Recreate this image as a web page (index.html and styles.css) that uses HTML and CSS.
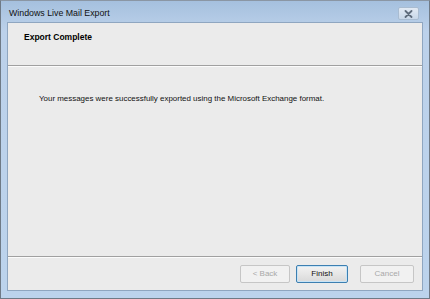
FILE: index.html
```html
<!doctype html>
<html>
  <head>
    <link rel="stylesheet" href="styles.css">
  </head>
  <body>
    <div class="window">
      <div class="titlebar">
        <span class="title">Windows Live Mail Export</span>
        <span class="close">
          <svg width="9" height="8" viewBox="0 0 9 8">
            <path d="M1.5 1 L7.5 7 M7.5 1 L1.5 7" stroke="#5f6c7c" stroke-width="1.8" stroke-linecap="round"/>
          </svg>
        </span>
      </div>
      <div class="client">
        <div class="header">
          <h1>Export Complete</h1>
        </div>
        <div class="body">
          <p>Your messages were successfully exported using the Microsoft Exchange format.</p>
        </div>
        <div class="footer">
          <button class="btn" disabled>&lt; Back</button>
          <button class="btn default">Finish</button>
          <button class="btn" disabled>Cancel</button>
        </div>
      </div>
    </div>
  </body>
</html>
```

FILE: styles.css
```css
html, body {
  margin: 0;
  padding: 0;
}

body {
  width: 430px;
  height: 299px;
  background: #fff;
  font-family: "Liberation Sans", sans-serif;
}

.window {
  width: 430px;
  height: 299px;
  box-sizing: border-box;
  border: 1px solid #6f7a86;
  border-top-color: #8a96a4;
  background: linear-gradient(to bottom, #a5c0de, #bcd1ea 30px, #bcd3ec);
  display: flex;
  flex-direction: column;
  padding: 0 6px 7px 6px;
}

.titlebar {
  height: 21px;
  display: flex;
  align-items: center;
  justify-content: space-between;
}

.title {
  font-size: 8.8px;
  color: #111;
  padding-left: 2px;
  margin-top: 3px;
}

.close {
  width: 19px;
  height: 11px;
  margin-right: 4px;
  margin-top: 4px;
  border: 1px solid #a9bcd1;
  border-radius: 2px;
  background: linear-gradient(#e2eaf4, #c8d7e8);
  display: flex;
  align-items: center;
  justify-content: center;
}

.client {
  flex: 1;
  background: #ebebeb;
  border: 1px solid #8fa6c0;
  display: flex;
  flex-direction: column;
}

.header {
  height: 43px;
  border-bottom: 1px solid #a0a0a0;
  box-shadow: 0 1px 0 #fbfbfb;
  padding: 9px 0 0 16px;
  box-sizing: border-box;
}

h1 {
  margin: 0;
  font-size: 8.5px;
  font-weight: bold;
  color: #000;
}

.body {
  flex: 1;
  padding: 28px 0 0 31px;
}

p {
  margin: 0;
  font-size: 7.95px;
  color: #111;
}

.footer {
  height: 33px;
  border-top: 1px solid #a0a0a0;
  box-shadow: inset 0 1px 0 #fbfbfb;
  display: flex;
  align-items: center;
  justify-content: flex-end;
  padding: 0 8px 0 0;
}

.btn {
  width: 50px;
  height: 18px;
  margin-left: 7px;
  padding: 0;
  font-family: "Liberation Sans", sans-serif;
  font-size: 8px;
  color: #a8a8a8;
  background: #f1f1f1;
  border: 1px solid #c6c6c6;
  border-radius: 2px;
}

.btn.default {
  color: #111;
  width: 52px;
  border: 1px solid #3c7fb1;
  background: linear-gradient(#f2f2f2, #e6e6e6 50%, #d9d9d9);
  box-shadow: inset 0 0 0 1px #c8e4f6;
  margin-left: 6px;
  margin-right: 5px;
}

.btn.default + .btn {
  width: 54px;
}
```
